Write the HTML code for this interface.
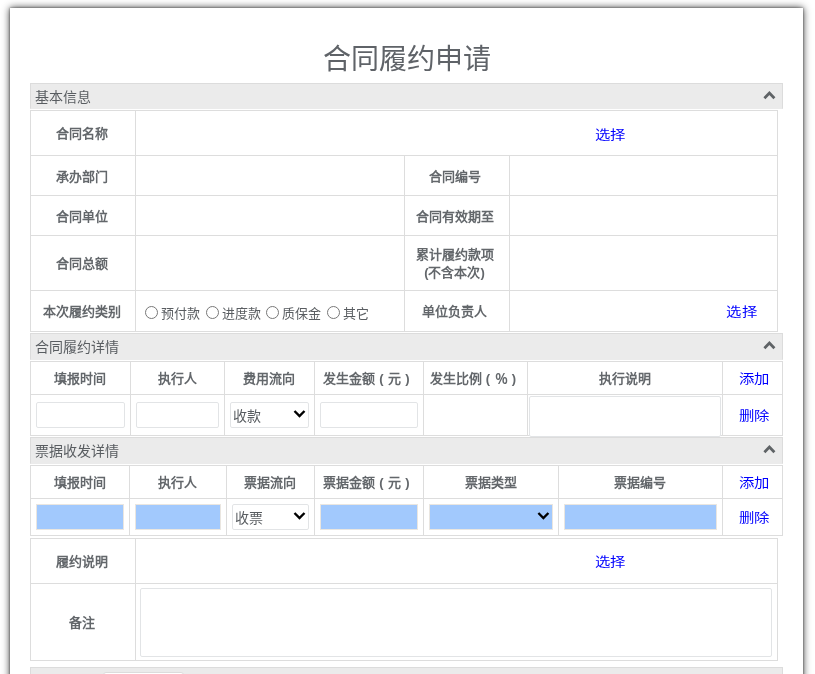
<!DOCTYPE html>
<html lang="zh-CN"><head><meta charset="utf-8"><title>合同履约申请</title>
<style>
html,body{margin:0;padding:0;background:#fff;width:815px;height:674px;overflow:hidden}
body{font-family:"Liberation Sans",sans-serif;position:relative}
#page{position:absolute;left:10px;top:8px;width:793px;height:720px;background:#fff;box-shadow:0 0 2px rgba(0,0,0,0.46),0 0 7.5px rgba(0,0,0,0.82)}
#c div{position:absolute}
i{font-style:normal;display:inline-block;width:1em;text-align:center}
#c{will-change:transform;position:absolute;left:0;top:0;width:815px;height:674px}
.title{font-size:28px;line-height:40px;color:#5f6368}
.lb{font-size:13px;font-weight:bold;color:#63676b;line-height:18px;white-space:nowrap}
.ht{font-size:14px;color:#595d61;line-height:18px}
.lk{font-size:14px;transform:scale(1.1,0.9);color:#0000ff;line-height:18px}
.st{font-size:14px;color:#595d61;line-height:18px;white-space:nowrap}
.rt{font-size:13px;color:#595d61;line-height:18px;white-space:nowrap}
.radio{width:11px;height:11px;border:1px solid #777;border-radius:50%}
</style></head><body>
<div id="page"></div>
<div id="c">
<div class="title" style="left:10px;top:40px;width:793px;text-align:center">合同履约申请</div>
<div style="left:30px;top:83px;width:751px;height:24px;border:1px solid #dcdcdc;border-bottom:1px solid #ebebeb;background:#ebebeb"></div>
<div class="ht" style="left:35px;top:88px;width:265px;text-align:left">基本信息</div>
<svg style="position:absolute;left:755px;top:83px" width="30" height="20" viewBox="755 83 30 20"><path d="M764.4 98.2 L769.4 93.1 L774.4 98.2" fill="none" stroke="#5f6366" stroke-width="2.8"/></svg>
<div style="left:30px;top:110px;width:748px;height:1px;background:#dddddd"></div>
<div style="left:30px;top:155px;width:748px;height:1px;background:#dddddd"></div>
<div style="left:30px;top:195px;width:748px;height:1px;background:#dddddd"></div>
<div style="left:30px;top:235px;width:748px;height:1px;background:#dddddd"></div>
<div style="left:30px;top:290px;width:748px;height:1px;background:#dddddd"></div>
<div style="left:30px;top:331px;width:748px;height:1px;background:#dddddd"></div>
<div style="left:30px;top:110px;width:1px;height:222px;background:#dddddd"></div>
<div style="left:777px;top:110px;width:1px;height:222px;background:#dddddd"></div>
<div style="left:135px;top:110px;width:1px;height:222px;background:#dddddd"></div>
<div style="left:404px;top:155px;width:1px;height:177px;background:#dddddd"></div>
<div style="left:509px;top:155px;width:1px;height:177px;background:#dddddd"></div>
<div class="lb" style="left:29px;top:125px;width:105px;text-align:center">合同名称</div>
<div class="lb" style="left:29px;top:168px;width:105px;text-align:center">承办部门</div>
<div class="lb" style="left:29px;top:208px;width:105px;text-align:center">合同单位</div>
<div class="lb" style="left:29px;top:255px;width:105px;text-align:center">合同总额</div>
<div class="lb" style="left:29px;top:303px;width:105px;text-align:center">本次履约类别</div>
<div class="lb" style="left:402px;top:168px;width:105px;text-align:center">合同编号</div>
<div class="lb" style="left:402px;top:208px;width:105px;text-align:center">合同有效期至</div>
<div class="lb" style="left:402px;top:246px;width:105px;text-align:center;line-height:18px">累计履约款项<br>(不含本次)</div>
<div class="lb" style="left:402px;top:303px;width:105px;text-align:center">单位负责人</div>
<div class="lk" style="left:580px;top:125px;width:60px;text-align:center">选择</div>
<div class="lk" style="left:714px;top:303px;width:55px;text-align:center">选择</div>
<div class="radio" style="left:145px;top:306px"></div>
<div class="rt" style="left:161px;top:305px">预付款</div>
<div class="radio" style="left:206px;top:306px"></div>
<div class="rt" style="left:222px;top:305px">进度款</div>
<div class="radio" style="left:266px;top:306px"></div>
<div class="rt" style="left:282px;top:305px">质保金</div>
<div class="radio" style="left:327px;top:306px"></div>
<div class="rt" style="left:343px;top:305px">其它</div>
<div style="left:30px;top:333px;width:751px;height:25px;border:1px solid #dcdcdc;border-bottom:1px solid #ebebeb;background:#ebebeb"></div>
<div class="ht" style="left:35px;top:338px;width:265px;text-align:left">合同履约详情</div>
<svg style="position:absolute;left:755px;top:333px" width="30" height="20" viewBox="755 333 30 20"><path d="M764.4 348.2 L769.4 343.1 L774.4 348.2" fill="none" stroke="#5f6366" stroke-width="2.8"/></svg>
<div style="left:30px;top:361px;width:753px;height:1px;background:#dddddd"></div>
<div style="left:30px;top:394px;width:753px;height:1px;background:#dddddd"></div>
<div style="left:30px;top:435px;width:753px;height:1px;background:#dddddd"></div>
<div style="left:30px;top:361px;width:1px;height:75px;background:#dddddd"></div>
<div style="left:130px;top:361px;width:1px;height:75px;background:#dddddd"></div>
<div style="left:224px;top:361px;width:1px;height:75px;background:#dddddd"></div>
<div style="left:314px;top:361px;width:1px;height:75px;background:#dddddd"></div>
<div style="left:423px;top:361px;width:1px;height:75px;background:#dddddd"></div>
<div style="left:527px;top:361px;width:1px;height:75px;background:#dddddd"></div>
<div style="left:722px;top:361px;width:1px;height:75px;background:#dddddd"></div>
<div style="left:782px;top:361px;width:1px;height:75px;background:#dddddd"></div>
<div class="lb" style="left:30px;top:370px;width:100px;text-align:center">填报时间</div>
<div class="lb" style="left:130px;top:370px;width:94px;text-align:center">执行人</div>
<div class="lb" style="left:224px;top:370px;width:90px;text-align:center">费用流向</div>
<div class="lb" style="left:314px;top:370px;width:109px;text-align:center">发生金额<i>(</i>元<i>)</i></div>
<div class="lb" style="left:423px;top:370px;width:104px;text-align:center">发生比例<i>(</i>％<i>)</i></div>
<div class="lb" style="left:527px;top:370px;width:195px;text-align:center">执行说明</div>
<div class="lk" style="left:724px;top:370px;width:60px;text-align:center">添加</div>
<div class="lk" style="left:724px;top:407px;width:60px;text-align:center">删除</div>
<div style="left:36px;top:402px;width:87px;height:24px;border:1px solid #e2e4e6;background:#fff;border-radius:2px;"></div>
<div style="left:136px;top:402px;width:81px;height:24px;border:1px solid #e2e4e6;background:#fff;border-radius:2px;"></div>
<div style="left:230px;top:402px;width:77px;height:24px;border:1px solid #e2e4e6;background:#fff;border-radius:2px;"></div>
<div class="st" style="left:233px;top:407px">收款</div>
<svg style="position:absolute;left:289px;top:406px" width="20" height="16" viewBox="289 406 20 16"><path d="M294.50 411.00 L299.50 416.00 L304.50 411.00" fill="none" stroke="#000" stroke-width="2.4"/></svg>
<div style="left:320px;top:402px;width:96px;height:24px;border:1px solid #e2e4e6;background:#fff;border-radius:2px;"></div>
<div style="left:529px;top:396px;width:190px;height:39px;border:1px solid #e2e4e6;background:#fff;border-radius:2px;"></div>
<div style="left:30px;top:437px;width:751px;height:25px;border:1px solid #dcdcdc;border-bottom:1px solid #ebebeb;background:#ebebeb"></div>
<div class="ht" style="left:35px;top:442px;width:265px;text-align:left">票据收发详情</div>
<svg style="position:absolute;left:755px;top:437px" width="30" height="20" viewBox="755 437 30 20"><path d="M764.4 452.2 L769.4 447.1 L774.4 452.2" fill="none" stroke="#5f6366" stroke-width="2.8"/></svg>
<div style="left:30px;top:465px;width:753px;height:1px;background:#dddddd"></div>
<div style="left:30px;top:498px;width:753px;height:1px;background:#dddddd"></div>
<div style="left:30px;top:535px;width:753px;height:1px;background:#dddddd"></div>
<div style="left:30px;top:465px;width:1px;height:71px;background:#dddddd"></div>
<div style="left:129px;top:465px;width:1px;height:71px;background:#dddddd"></div>
<div style="left:226px;top:465px;width:1px;height:71px;background:#dddddd"></div>
<div style="left:314px;top:465px;width:1px;height:71px;background:#dddddd"></div>
<div style="left:423px;top:465px;width:1px;height:71px;background:#dddddd"></div>
<div style="left:558px;top:465px;width:1px;height:71px;background:#dddddd"></div>
<div style="left:722px;top:465px;width:1px;height:71px;background:#dddddd"></div>
<div style="left:782px;top:465px;width:1px;height:71px;background:#dddddd"></div>
<div class="lb" style="left:30px;top:474px;width:99px;text-align:center">填报时间</div>
<div class="lb" style="left:129px;top:474px;width:97px;text-align:center">执行人</div>
<div class="lb" style="left:226px;top:474px;width:88px;text-align:center">票据流向</div>
<div class="lb" style="left:314px;top:474px;width:109px;text-align:center">票据金额<i>(</i>元<i>)</i></div>
<div class="lb" style="left:423px;top:474px;width:135px;text-align:center">票据类型</div>
<div class="lb" style="left:558px;top:474px;width:164px;text-align:center">票据编号</div>
<div class="lk" style="left:724px;top:474px;width:60px;text-align:center">添加</div>
<div class="lk" style="left:724px;top:509px;width:60px;text-align:center">删除</div>
<div style="left:36px;top:504px;width:86px;height:24px;border:1px solid #eae6e0;background:#a2c9fd;"></div>
<div style="left:135px;top:504px;width:84px;height:24px;border:1px solid #eae6e0;background:#a2c9fd;"></div>
<div style="left:232px;top:504px;width:75px;height:24px;border:1px solid #e2e4e6;background:#fff;border-radius:2px;"></div>
<div class="st" style="left:235px;top:509px">收票</div>
<svg style="position:absolute;left:289px;top:508px" width="20" height="16" viewBox="289 508 20 16"><path d="M294.50 513.00 L299.50 518.00 L304.50 513.00" fill="none" stroke="#000" stroke-width="2.4"/></svg>
<div style="left:320px;top:504px;width:96px;height:24px;border:1px solid #eae6e0;background:#a2c9fd;"></div>
<div style="left:429px;top:504px;width:122px;height:24px;border:1px solid #eae6e0;background:#a2c9fd;"></div>
<svg style="position:absolute;left:533px;top:508px" width="20" height="16" viewBox="533 508 20 16"><path d="M538.40 513.00 L543.40 518.00 L548.40 513.00" fill="none" stroke="#000" stroke-width="2.4"/></svg>
<div style="left:564px;top:504px;width:151px;height:24px;border:1px solid #eae6e0;background:#a2c9fd;"></div>
<div style="left:30px;top:538px;width:748px;height:1px;background:#dddddd"></div>
<div style="left:30px;top:583px;width:748px;height:1px;background:#dddddd"></div>
<div style="left:30px;top:660px;width:748px;height:1px;background:#dddddd"></div>
<div style="left:30px;top:538px;width:1px;height:123px;background:#dddddd"></div>
<div style="left:135px;top:538px;width:1px;height:123px;background:#dddddd"></div>
<div style="left:777px;top:538px;width:1px;height:123px;background:#dddddd"></div>
<div class="lb" style="left:29px;top:553px;width:105px;text-align:center">履约说明</div>
<div class="lb" style="left:29px;top:614px;width:105px;text-align:center">备注</div>
<div class="lk" style="left:580px;top:552px;width:60px;text-align:center">选择</div>
<div style="left:140px;top:588px;width:630px;height:67px;border:1px solid #e2e4e6;background:#fff;border-radius:2px;"></div>
<div style="left:30px;top:667px;width:751px;height:32px;border:1px solid #dcdcdc;background:#ebebeb;"></div>
<div style="left:103px;top:672px;width:79px;height:27px;border:1px solid #dcdcdc;background:#fff;border-radius:3px;"></div>
</div>
</body></html>
